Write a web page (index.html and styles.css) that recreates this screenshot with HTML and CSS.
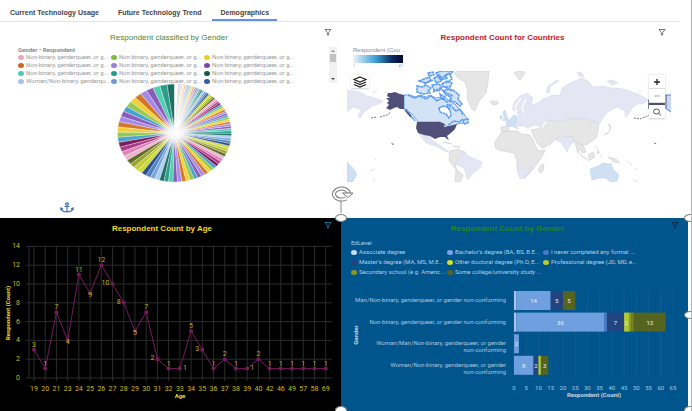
FILE: index.html
```html
<!DOCTYPE html>
<html lang="en">
<head>
<meta charset="utf-8">
<title>Survey dashboard</title>
<link rel="stylesheet" href="styles.css">
</head>
<body>
<nav class="tabs">
  <a class="tab" href="#current">Current Technology Usage</a>
  <a class="tab" href="#future">Future Technology Trend</a>
  <a class="tab tab-active" href="#demographics" aria-current="page">Demographics</a>
</nav>
<main class="board">
  <section class="panel">
    <header class="head head-classified">
      <h2 class="title title-light">Respondent classified by Gender</h2>
      <button class="filter" aria-label="Filter"><svg viewBox="0 0 8 8"><path d="M1 1.500H7L4.700 4.400V7H3.300V4.400Z"/></svg></button>
    </header>
    <div class="pie-legend">
      <div class="legend-body">
        <p class="legend-title">Gender • Respondent</p>
        <ul class="legend-grid" id="pie-keys"></ul>
      </div>
      <div class="scroll"><span class="arrow arrow-up"></span><span class="thumb"></span><span class="arrow arrow-down"></span></div>
    </div>
    <svg class="pie" viewBox="0 0 341 100" role="img" aria-label="Respondents by gender">
      <defs><radialGradient id="glow"><stop offset="0" stop-color="#fff"/><stop offset=".1" stop-color="#fff" stop-opacity=".8"/><stop offset=".35" stop-color="#fff" stop-opacity="0"/></radialGradient>
      <linearGradient id="fade"><stop offset="0" stop-color="#fff" stop-opacity=".85"/><stop offset="1" stop-color="#fff" stop-opacity="0"/></linearGradient></defs>
      <g id="slices"></g>
      <path d="M174.500 49V0A57 49 0 0 1 204 7Z" fill="url(#fade)"/>
      <ellipse cx="174.500" cy="49" rx="57" ry="49" fill="url(#glow)"/>
    </svg>
    <svg class="anchor" viewBox="0 0 14 11" aria-hidden="true"><ellipse cx="7" cy="2" rx="1.500" ry="1.200"/><path d="M7 3.200V10M4.500 4.500H9.500M1 6.200C1.500 9 4 10 7 10S12.500 9 13 6.200M.6 8L1 6L3 7M13.400 8L13 6L11 7"/></svg>
  </section>

  <section class="panel">
    <header class="head head-countries">
      <h2 class="title title-red">Respondent Count for Countries</h2>
      <button class="filter" aria-label="Filter"><svg viewBox="0 0 8 8"><path d="M1 1.500H7L4.700 4.400V7H3.300V4.400Z"/></svg></button>
    </header>
    <div class="scale">
      <p class="legend-title">Respondent (Cou...</p>
      <div class="ramp"></div>
      <div class="ends"><span>1</span><span>41</span></div>
    </div>
    <div class="map">
      <svg viewBox="347 71 325 111" role="img" aria-label="World map of respondents">
        <g class="none">
          <path d="M454 73L457 71H489L488 82L486 93L480 100L477 105L475 111L471 108L467 98L468 92L465 82L458 78Z"/>
          <path d="M490 102L492 101L498 101.500L498 104L493 105Z"/>
          <path d="M514 73L518 71L525 72L523 76L520 80L517 77Z"/>
          <path d="M495 147L495 142L501 133L507 131L517 131L522 134L530 135L533 140L538 151L545 150L542 157L536 165L530 173L525 178L520 178L517 168L517 160L514 153L503 151L498 150Z"/>
          <path d="M541 165L544 164L543 171L540 173L538 170Z"/>
          <path d="M501 127L508 126L509 131L504 132L501 131Z"/>
          <path d="M531 130L540 128L544 119L560 121L577 118L590 120L599 123L598 132L596 138L588 144L583 145L575 142L573 137L560 136L553 141L551 144L542 148L538 144L534 137Z"/>
          <path d="M604 135L609 132L611 126L608 124L611 129L607 134Z"/>
          <path d="M595 146L598 149L597 154L600 152M577 151L584 158L590 161M588 155L593 152L595 157L590 160ZM600 155L603 158M608 157L616 159L620 163L614 162Z"/>
          <path d="M575 142L583 145L586 152L582 153L580 148L578 153Z"/>
          <path d="M443 142L452 144L449 143ZM453 146L457 147L460 147Z"/>
          <path d="M450 151L458 149L465 152L460 159L455 164L457 170L463 175L460 182H455L456 170L449 160Z"/>
          <path d="M372 93L377 91M384 92L389 93M375 158V160M370 171L375 169M373 179L375 182M627 161L632 165M635 168L638 170M633 179L638 182"/>
        </g>
        <g class="low">
          <path d="M347 90L354 91L360 92L367 96L373 97L378 99L383 101L379 104L372 106L370 108L364 112L360 118L358 116L361 110L353 107L347 112Z"/>
          <path d="M512 109L515 101L520 96L527 93L533 98L531 105L538 103L543 99L553 95L560 95.500L562 88L570 83L582 78L588 81L593 87L603 86L610 88L618 88L627 90L640 95L648 100L643 104L638 104L633 107L628 115L625 117V111L617 107L608 112L604 116L600 123L590 120L577 118L560 121L547 120L542 127L534 125L528 128L524 126L518 126L516 120L519 116L516 111Z"/>
          <path d="M546 92L548 86L557 80L559 81L551 86L549 93Z"/>
          <path d="M577 72L582 73L584 77L579 76ZM607 81L613 80L618 83L612 85ZM637 93L641 91"/>
          <path d="M558 137L573 137L574 142L570 145L567 152L563 146L561 142L556 140Z"/>
          <path d="M419 134L430 136L434 142L440 145L445 149L450 153L443 150L435 146L426 143L422 138Z"/>
          <path d="M465 152L468 156L482 162L480 168L473 173L468 180L466 175L464 168L455 164L460 157Z"/>
          <path d="M517 168L529 169L528 174L524 178L520 178Z"/>
        </g>
        <g class="mid">
          <path d="M590 169L598 166L603 163L609 164L611 163L613 169L619 175L617 181L611 182L605 178L599 178L592 180Z"/>
          <path d="M347 162L352 167L357 174L353 182H347Z"/>
          <path d="M503 112L505 110L507 116L508 120L503 121L504 117ZM500 116L502 115L502 119L500 119Z"/>
          <path d="M506 122L511 118L514 115L517 116L516 124L518 129L512 126L507 127Z"/>
        </g>
        <path d="M517 112L515 107L521 98M524 113L522 107L526 99M520 128L525 133M530 129L536 126M546 121L542 128" class="water"/>
        <g class="picked">
          <path d="M404 95L410 95L415 97L420 95L426 97L430 95L436 98L441 97L447 99L451 102L456 105L458 108L461 110L464 114L467 119L463 123L457 124L454 126L448 127L440 122H418L412 114L404 109Z" class="land"/>
          <path d="M439 108L443 106L447 107L450 110L451 115L449 118L446 114L440 112Z" class="bay"/>
          <path d="M417 86L422 87L426 85L431 88L428 91L430 93L423 94L417 92ZM419 81L424 79L429 77L431 80L426 83L422 82ZM428 73L433 72L434 75L429 76ZM434 78L440 76L441 81L436 83ZM436 73L441 71H453L451 74L445 75L447 78L441 80L438 77ZM432 85L439 84L442 87L439 91L434 90ZM442 84L447 81L452 83L450 87L444 87ZM443 91L449 89L453 90L459 95L458 99L462 104L460 106L455 102L450 101L451 97L446 95ZM440 94L445 97L442 100ZM447 105L451 105L449 109ZM463 120L468 119L468 123L464 124Z"/>
          <path d="M406 109L411 116L415 121M408 95L414 98L420 96L426 99L431 96L437 101L442 98L447 102L452 99M452 107L456 111L460 109L463 115M448 125L454 121L459 122L463 119M438 74L442 78L449 73L452 79L446 83M424 84L433 80M433 92L440 88L446 93L453 96M445 87L452 91" class="coast"/>
        </g>
        <g class="high">
          <path d="M404 95L400 94L395 92L391 93L388 93L387 96L390 98L386 98L389 101L387 103L389 105L386 108L390 110L394 108L397 107L400 109L404 109L408 112L412 117L410 117L405 111L404 109Z"/>
          <path d="M417 122H440L445 124L444 127L449 126L457 124L455 129L452 132L447 136L449 140L447 139L445 137L440 137L435 139L430 136L424 135L418 133L416 128Z"/>
          <path d="M391 143L394 144L393 145Z"/>
        </g>
        <path class="islands" d="M371 118L377 117M380 117L387 115L391 112"/>
        <path class="islands" d="M634 118L640 119L645 117L650 115M654 143L657 144"/>
        <path class="high" d="M648 99L651 102H666V106H652L648 109Z"/>
        <path d="M665 95H671V112L665 108Z" fill="#c7dbf4"/><path d="M665 95H671M665 108L671 112" stroke="#4a86d8"/><path d="M666 95V108" stroke="#4b4a77" stroke-width="1"/>
      </svg>
      <button class="map-btn layers" aria-label="Layers"><svg viewBox="0 0 14 12"><path d="M7 1L13 3.500L7 6L1 3.500ZM1 6L7 8.500L13 6M1 8.500L7 11L13 8.500"/></svg></button>
      <div class="zoom">
        <button class="map-btn" aria-label="Zoom in"><svg viewBox="0 0 14 12"><path d="M7 3V9M4 6H10"/></svg></button>
        <button class="map-btn dim" aria-label="Zoom out"><svg viewBox="0 0 14 12"><path d="M4 6H10"/></svg></button>
        <button class="map-btn find" aria-label="Search map"><svg viewBox="0 0 14 12"><ellipse cx="6.500" cy="5.500" rx="3" ry="2.500"/><path d="M8.700 7.300L11 9.500"/></svg></button>
      </div>
    </div>
  </section>

  <section class="panel dark">
    <header class="head head-age">
      <h2 class="title">Respondent Count by Age</h2>
      <button class="filter" aria-label="Filter"><svg viewBox="0 0 8 8"><path d="M1 1.500H7L4.700 4.400V7H3.300V4.400Z"/></svg></button>
    </header>
    <svg class="plot" id="age" viewBox="0 0 341 165" role="img" aria-label="Respondent count by age"></svg>
  </section>

  <section class="panel blue">
    <header class="head head-gender">
      <h2 class="title">Respondent Count by Gender</h2>
      <button class="filter" aria-label="Filter"><svg viewBox="0 0 8 8"><path d="M1 1.500H7L4.700 4.400V7H3.300V4.400Z"/></svg></button>
    </header>
    <div class="ed-legend">
      <p class="legend-title">EdLevel</p>
      <ul class="legend-grid">
        <li><i class="dot k1"></i>Associate degree</li>
        <li><i class="dot k2"></i>Bachelor’s degree (BA, BS, B.E...</li>
        <li><i class="dot k3"></i>I never completed any formal ...</li>
        <li><i class="dot k4"></i>Master’s degree (MA, MS, M.E...</li>
        <li><i class="dot k5"></i>Other doctoral degree (Ph.D, E...</li>
        <li><i class="dot k6"></i>Professional degree (JD, MD, e...</li>
        <li><i class="dot k7"></i>Secondary school (e.g. Americ...</li>
        <li><i class="dot k8"></i>Some college/university study ...</li>
      </ul>
    </div>
    <svg class="plot" id="gender" viewBox="0 0 347 126" role="img" aria-label="Respondent count by gender and education"></svg>
    <svg class="rotate" viewBox="0 0 28 28" aria-hidden="true">
      <path d="M11 15V28" class="stem"/>
      <path d="M19 9A7.500 5.500 0 1 0 16 13.500" class="outer"/>
      <path d="M19 9A7.500 5.500 0 1 0 16 13.500" class="inner"/>
      <path d="M12.500 8H23L18 12.500Z" class="tip"/>
    </svg>
    <span class="grip tl"></span><span class="grip bl"></span><span class="grip tr"></span><span class="grip mr"></span><span class="grip br"></span>
  </section>
</main>
<script src="charts.js"></script>
</body>
</html>
```
FILE: styles.css
```css
* { box-sizing: border-box; }
body {
  margin: 0;
  min-height: 100vh;
  display: flex;
  flex-direction: column;
  padding-right: 3px;
  border-right: 1px solid #b4b4b4;
  background: #fff;
  color: #333;
  font-family: Roboto, "Liberation Sans", sans-serif;
  font-size: 6px;
  line-height: 8px;
  overflow: hidden;
}
h2, p, ul { margin: 0; padding: 0; }
ul { list-style: none; }
button { border: 0; padding: 0; background: none; color: #555; }
svg { display: block; }

.tabs { display: flex; padding-left: 2px; height: 22px; margin-right: 8px; border-bottom: 1px solid #e6e6e6; }
.tab {
  padding: 8px 8px 0;
  margin-right: 3px;
  color: #444;
  font: 700 7px/10px "Liberation Sans", Arial, sans-serif;
  text-decoration: none;
  border-bottom: 2px solid transparent;
}
.tab-active { border-bottom-color: #648fea; }

.board { flex: 1; display: grid; grid-template-columns: 341fr 347fr; grid-template-rows: 196px 1fr; }
.panel { position: relative; min-width: 0; }
.head { display: flex; align-items: flex-start; }
.title { flex: 1; text-align: center; font: 700 8px/12px "Liberation Sans", Arial, sans-serif; }
.filter { width: 8px; height: 8px; }
.filter svg { width: 8px; height: 8px; fill: none; stroke: currentColor; stroke-width: .8; }
.head-classified { padding: 6px 9px 0 14px; }
.head-classified .title, .head-countries .title { padding-top: 4px; }
.head-countries { padding: 6px 22px 0 6px; }
.head-age { padding: 3px 9px 0 0; }
.head-gender { padding: 3px 9px 0 3px; }
.head-age .title, .head-gender .title { padding-top: 2px; }
.title.title-light { color: #4d8536; font-weight: 400; }
.title-red { color: #bf2026; }

.pie-legend { display: flex; justify-content: space-between; padding: 2px 4px 0 18px; }
.legend-title { font-weight: 700; font-size: 6px; line-height: 7px; color: #8a8a8a; }
.legend-grid { display: grid; }
.legend-grid li { display: flex; align-items: center; gap: 2px; white-space: nowrap; }
.pie-legend .legend-grid { grid-template-columns: repeat(3, 93px); line-height: 8px; color: #999; }
.dot { width: 6px; height: 5px; border-radius: 50%; flex: none; }
.scroll { width: 8px; height: 36px; margin-top: 1px; background: #f1f1f1; display: flex; flex-direction: column; align-items: center; padding: 3px 0; }
.arrow { border: 2px solid transparent; }
.arrow-up { border-top: 0; border-bottom-color: #888; }
.arrow-down { border-bottom: 0; border-top-color: #444; margin-top: auto; }
.thumb { width: 6px; height: 8px; margin-top: 2px; background: #c1c1c1; }
.pie { width: 100%; margin-top: -1px; }
.anchor { width: 14px; height: 11px; margin: 18px 0 0 60px; fill: none; stroke: #4472b4; stroke-width: 1.2; }

.scale { width: 62px; padding: 3px 0 0 12px; }
.scale .legend-title { font: 6px/7px "Liberation Sans", Arial, sans-serif; white-space: nowrap; }
.ramp { height: 8px; margin-top: 1px; background: linear-gradient(90deg, #eef2fc, #3ba0d8 45%, #0d2b62 78%, #060a30); }
.ends { display: flex; justify-content: space-between; font-size: 4px; line-height: 5px; color: #999; }
.map { position: relative; margin: 3px 16px 0 6px; }
.map > svg { width: 100%; }
.none path { fill: #e6e6e7; stroke: #cfcfd2; stroke-width: .6; }
.low path { fill: #e4e6f4; stroke: #d3d6ea; stroke-width: .5; }
.mid path { fill: #cfe0f2; stroke: #b9d2ea; stroke-width: .5; }
.water { fill: none; stroke: #fff; stroke-width: 1.3; }
.picked path { fill: #d3e3f6; stroke: #5b9bf0; stroke-width: 1.5; stroke-dasharray: 3 .4; }
.picked .land { stroke-width: 1; }
.picked .bay { fill: #fff; }
.picked .coast { fill: none; }
.high, .high path { fill: #504f79; }
.islands { fill: none; stroke: #777; stroke-dasharray: 2 1; }
.map-btn { display: block; width: 16px; height: 14px; background: #fff; border-bottom: 1px solid #ddd; }
.map-btn svg { width: 14px; height: 12px; margin: 0 auto; fill: none; stroke: #222; stroke-width: 1.3; }
.layers { position: absolute; left: 4px; top: 4px; width: 18px; border-radius: 2px; box-shadow: 0 0 2px #ccc; }
.zoom { position: absolute; right: 7px; top: 4px; box-shadow: 0 0 2px #ccc; }
.dim svg { stroke: #bbb; }
.find { margin-top: 2px; }
.find svg { stroke: #555; stroke-width: 1; }

.dark { background: #000; color: #f2d928; }
.dark .filter { color: #1687b4; }
.blue { background: #00558d; color: #b5cfe4; border-top-right-radius: 4px; }
.blue .title { color: #23852e; }
.blue .filter { color: #0c2740; }
.plot { width: 100%; }
.plot text { font-size: 6px; }
.plot .age-text { fill: #cdbb28; font-size: 7px; }
.plot .age-value { fill: #bfae24; font-size: 7px; }
.age-strong { fill: #f2d928; font-weight: 700; }
.age-grid { stroke: #2a2c2c; stroke-width: 1; }
.age-line { fill: none; stroke: #761a5e; }
.age-dot { fill: #761a5e; }
.end { text-anchor: end; }
.center { text-anchor: middle; }
.bar-grid { stroke: #0f5c93; }
.bar-text { fill: #a9c7df; }
.bar-strong { fill: #c5daea; font-weight: 700; }
.bar-value { fill: #e8eff8; }
.ed-legend { padding: 4px 0 0 10px; }
.ed-legend .legend-title { color: #b5cfe4; font-weight: 400; line-height: 8px; }
.ed-legend .legend-grid { grid-template-columns: repeat(3, 96px); line-height: 10px; }
.k1 { background: #c9dcfb; }
.k2 { background: #79a6e6; }
.k3 { background: #4a78c4; }
.k4 { background: #24437f; }
.k5 { background: #d7e22c; }
.k6 { background: #bccb2a; }
.k7 { background: #8c9a23; }
.k8 { background: #586420; }

.rotate { position: absolute; left: -11px; top: -33px; width: 28px; height: 28px; fill: none; }
.stem { stroke: #888; }
.outer { stroke: #777; stroke-width: 4; }
.inner { stroke: #fff; stroke-width: 2; }
.tip { fill: #fff; stroke: #777; }
.grip { position: absolute; width: 12px; height: 8px; border: 1px solid #808080; border-radius: 50%; background: #fff; }
.tl { left: -6px; top: -4px; }
.bl { left: -6px; bottom: -3px; }
.tr { right: -8px; top: -4px; }
.mr { right: -8px; top: 93px; }
.br { right: -8px; bottom: -3px; }
```
FILE: charts.js
```js
function range(n) { return Array.from({ length: n }, (_, i) => i); }

// Pie legend
const keys = ['#e8a5c4', '#82bb37', '#f2cd28', '#c66a1e', '#9480dc', '#7a48a8', '#47cdb0', '#27998c', '#0e5c50', '#a9c0ea', '#6c97d4', '#2e5ca8'];
document.getElementById('pie-keys').innerHTML = keys.map((c, i) =>
  `<li><i class="dot" style="background:${c}"></i>${i === 9 ? 'Woman/Non-binary, genderqu...' : 'Non-binary, genderqueer, or g...'}</li>`).join('');

// Pie slices, counter-clockwise from the top, shrinking along the way
const cycle = ['#1f6f63', '#2f9c8b', '#4fd0b0', '#8a5db8', '#a48be8', '#d6762c', '#f5cf36', '#98c94f', '#4aa3cf', '#8a5db8', '#a48be8', '#d6762c', '#f5cf36', '#98c94f', '#4aa3cf', '#7a1f5c', '#b23a8a', '#dc86b8', '#f0b3cf', '#5f6a22', '#98a233', '#c2cc3e', '#d2d840', '#27508c', '#4f80c0', '#7aa6de', '#b0ccf0'];
const at = d => {
  const r = d * Math.PI / 180;
  return `${(174.5 - 57 * Math.sin(r)).toFixed(2)} ${(49 - 49 * Math.cos(r)).toFixed(2)}`;
};
let angle = 0, slices = '';
for (let i = 0; angle < 356; i++) {
  const width = Math.max(1.5, 7.6 - angle * 0.0175);
  slices += `<path d="M174.5 49L${at(angle)}L${at(angle + width)}Z" fill="${cycle[i % cycle.length]}" stroke="#fff" stroke-width=".3"/>`;
  angle += width;
}
document.getElementById('slices').innerHTML = slices;

// Age line chart
const ages = [19, 20, 21, 23, 24, 25, 26, 27, 28, 29, 30, 31, 32, 33, 34, 35, 36, 37, 38, 39, 40, 42, 46, 49, 57, 58, 69];
const counts = [3, 1, 7, 4, 11, 9, 12, 10, 8, 5, 7, 2, 1, 1, 5, 3, 1, 2, 1, 1, 2, 1, 1, 1, 1, 1, 1];
const side = { 3: [0, 3], 5: [0, 3], 9: [0, 3], 7: [-7, 0], 8: [-5, 0], 11: [-5, 0], 13: [5, 0], 15: [-5, 0], 19: [5, 0] };
const ax = i => 34 + 11.22 * i;
const ay = v => 143 - 9.4 * v;
let out = '';
range(8).forEach(i => {
  out += `<path class="age-grid" d="M26 ${ay(i * 2)}H332"/><text class="age-text end" x="20" y="${ay(i * 2) + 2}">${i * 2}</text>`;
});
out += `<path class="age-grid" d="M29 ${ay(14)}V${ay(0)}"/>`;
ages.forEach((a, i) => {
  out += `<path class="age-grid" d="M${ax(i)} ${ay(14)}V${ay(0) + 3}"/><text class="age-text center" x="${ax(i)}" y="156">${a}</text>`;
});
out += `<polyline class="age-line" points="${counts.map((v, i) => ax(i) + ',' + ay(v)).join(' ')}"/>`;
counts.forEach((v, i) => {
  const [dx, dy] = side[i] || [0, -4];
  out += `<circle class="age-dot" cx="${ax(i)}" cy="${ay(v)}" r="2"/><text class="age-value center" x="${ax(i) + dx}" y="${ay(v) + dy + 1}">${v}</text>`;
});
out += '<text class="age-strong center" x="180" y="163">Age</text><text class="age-strong center" transform="translate(10 78) rotate(-90)">Respondent (Count)</text>';
document.getElementById('age').innerHTML = out;

// Gender stacked bars
const fills = { a: '#a9c6f0', b: '#6f9fdf', c: '#4a78c4', m: '#22457f', o: '#b5c82e', p: '#8e9e2b', s: '#73812a', u: '#55641f' };
const rows = [
  { label: ['Man/Non-binary, genderqueer, or gender non-conforming'], bars: [['a', 1], ['b', 14, 14], ['m', 5, 5], ['u', 5, 5]] },
  { label: ['Non-binary, genderqueer, or gender non-conforming'], bars: [['a', 1], ['b', 36, 36], ['c', 1], ['m', 7, 7], ['o', 2, 2], ['p', 1], ['s', 1], ['u', 13, 13]] },
  { label: ['Woman/Man/Non-binary, genderqueer, or gender', 'non-conforming'], bars: [['b', 2, 2]] },
  { label: ['Woman/Non-binary, genderqueer, or gender', 'non-conforming'], bars: [['b', 8, 8], ['m', 2, 2], ['o', 1], ['u', 3, 3]] }
];
const bx = v => 173 + 2.446 * v;
out = '';
range(14).forEach(i => {
  out += `<path class="bar-grid" d="M${bx(i * 5)} 13V100"/><text class="bar-text center" x="${bx(i * 5)}" y="113">${i * 5}</text>`;
});
rows.forEach((row, r) => {
  const top = 14 + r * 21.6;
  let sum = 0;
  row.label.forEach((t, k) => {
    out += `<text class="bar-text end" x="165" y="${top + 11 + k * 7}">${t}</text>`;
  });
  row.bars.forEach(([k, n, t]) => {
    out += `<rect x="${bx(sum)}" y="${top}" width="${n * 2.446}" height="19" fill="${fills[k]}"/>`;
    if (t) out += `<text class="bar-value center" x="${bx(sum + n / 2)}" y="${top + 12}">${t}</text>`;
    sum += n;
  });
});
out += '<text class="bar-strong center" x="253" y="120">Respondent (Count)</text><text class="bar-strong center" transform="translate(17 58) rotate(-90)">Gender</text>';
document.getElementById('gender').innerHTML = out;
```
